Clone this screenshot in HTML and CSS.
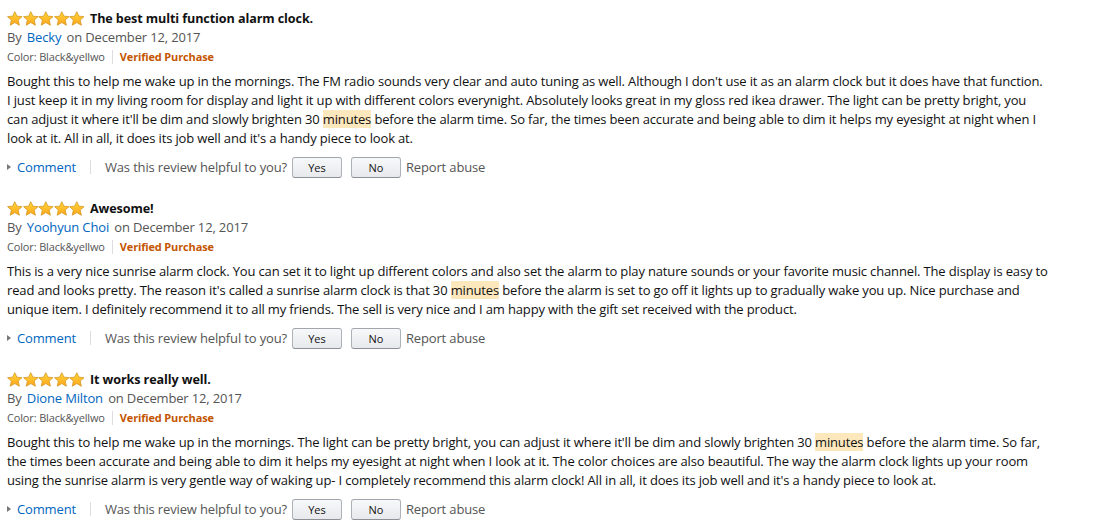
FILE: index.html
```html
<!DOCTYPE html>
<html lang="en">
<head>
  <meta charset="UTF-8">
  <title>Customer reviews</title>
  <link rel="stylesheet" href="styles.css">
</head>
<body>

  <svg width="0" height="0" class="defs">
    <defs>
      <linearGradient id="starFill" x1="0" y1="0" x2="0" y2="1">
        <stop offset="0" stop-color="#ffd83a"/>
        <stop offset="1" stop-color="#ffa41c"/>
      </linearGradient>
      <symbol id="star" viewBox="0 0 16 15">
        <path d="M8 0.5 L10.2 5.1 L15.4 5.6 L11.5 9.1 L12.7 14.4 L8 11.7 L3.3 14.4 L4.5 9.1 L0.6 5.6 L5.8 5.1 Z" fill="url(#starFill)" stroke="#d3961c" stroke-width="0.8" stroke-linejoin="round"/>
      </symbol>
    </defs>
  </svg>

  <div class="reviews">

    <div class="review">
      <div class="review-head">
        <span class="stars">
          <svg><use href="#star"/></svg><svg><use href="#star"/></svg><svg><use href="#star"/></svg><svg><use href="#star"/></svg><svg><use href="#star"/></svg>
        </span>
        <a class="review-title" href="#">The best multi function alarm clock.</a>
      </div>
      <div class="byline">By <a class="author" href="#">Becky</a> on December 12, 2017</div>
      <div class="meta">
        <span class="variant">Color: Black&amp;yellwo</span>
        <span class="verified">Verified Purchase</span>
      </div>
      <p class="review-text">Bought this to help me wake up in the mornings. The FM radio sounds very clear and auto tuning as well. Although I don't use it as an alarm clock but it does have that function. I just keep it in my living room for display and light it up with different colors everynight. Absolutely looks great in my gloss red ikea drawer. The light can be pretty bright, you can adjust it where it'll be dim and slowly brighten 30 <span class="hl">minutes</span> before the alarm time. So far, the times been accurate and being able to dim it helps my eyesight at night when I look at it. All in all, it does its job well and it's a handy piece to look at.</p>
      <div class="actions">
        <a class="comment" href="#">Comment</a>
        <span class="helpful">Was this review helpful to you?</span>
        <button class="vote">Yes</button>
        <button class="vote">No</button>
        <a class="report" href="#">Report abuse</a>
      </div>
    </div>

    <div class="review">
      <div class="review-head">
        <span class="stars">
          <svg><use href="#star"/></svg><svg><use href="#star"/></svg><svg><use href="#star"/></svg><svg><use href="#star"/></svg><svg><use href="#star"/></svg>
        </span>
        <a class="review-title" href="#">Awesome!</a>
      </div>
      <div class="byline">By <a class="author" href="#">Yoohyun Choi</a> on December 12, 2017</div>
      <div class="meta">
        <span class="variant">Color: Black&amp;yellwo</span>
        <span class="verified">Verified Purchase</span>
      </div>
      <p class="review-text">This is a very nice sunrise alarm clock. You can set it to light up different colors and also set the alarm to play nature sounds or your favorite music channel. The display is easy to read and looks pretty. The reason it's called a sunrise alarm clock is that 30 <span class="hl">minutes</span> before the alarm is set to go off it lights up to gradually wake you up. Nice purchase and unique item. I definitely recommend it to all my friends. The sell is very nice and I am happy with the gift set received with the product.</p>
      <div class="actions">
        <a class="comment" href="#">Comment</a>
        <span class="helpful">Was this review helpful to you?</span>
        <button class="vote">Yes</button>
        <button class="vote">No</button>
        <a class="report" href="#">Report abuse</a>
      </div>
    </div>

    <div class="review">
      <div class="review-head">
        <span class="stars">
          <svg><use href="#star"/></svg><svg><use href="#star"/></svg><svg><use href="#star"/></svg><svg><use href="#star"/></svg><svg><use href="#star"/></svg>
        </span>
        <a class="review-title" href="#">It works really well.</a>
      </div>
      <div class="byline">By <a class="author" href="#">Dione Milton</a> on December 12, 2017</div>
      <div class="meta">
        <span class="variant">Color: Black&amp;yellwo</span>
        <span class="verified">Verified Purchase</span>
      </div>
      <p class="review-text">Bought this to help me wake up in the mornings. The light can be pretty bright, you can adjust it where it'll be dim and slowly brighten 30 <span class="hl">minutes</span> before the alarm time. So far, the times been accurate and being able to dim it helps my eyesight at night when I look at it. The color choices are also beautiful. The way the alarm clock lights up your room using the sunrise alarm is very gentle way of waking up- I completely recommend this alarm clock! All in all, it does its job well and it's a handy piece to look at.</p>
      <div class="actions">
        <a class="comment" href="#">Comment</a>
        <span class="helpful">Was this review helpful to you?</span>
        <button class="vote">Yes</button>
        <button class="vote">No</button>
        <a class="report" href="#">Report abuse</a>
      </div>
    </div>

  </div>

</body>
</html>
```

FILE: styles.css
```css
body {
  margin: 0;
  padding: 8px 7px 0;
  background-color: #fff;
  color: #111;
  font-family: "Open Sans", "Noto Sans", Arial, sans-serif;
  font-size: 13px;
  letter-spacing: -0.15px;
}

a {
  text-decoration: none;
}

.defs {
  position: absolute;
  width: 0;
  height: 0;
}

.reviews {
  width: 1041px;
}

.review {
  margin-bottom: 20px;
}

.review-head {
  display: flex;
  align-items: center;
  height: 20px;
}

.stars {
  display: flex;
  margin-right: 5px;
}

.stars svg {
  width: 15.6px;
  height: 15px;
}

.review-title {
  color: #111;
  font-weight: bold;
  font-size: 12.6px;
  letter-spacing: -0.1px;
}

.byline {
  line-height: 19px;
  color: #555;
}

.author {
  color: #0066c0;
  margin: 0 2px;
}

.meta {
  display: flex;
  align-items: center;
  line-height: 19px;
  font-size: 11px;
  color: #555;
}

.variant {
  padding-right: 7px;
  border-right: 1px solid #ddd;
  line-height: 14px;
}

.verified {
  padding-left: 7px;
  color: #c45500;
  font-weight: bold;
}

.review-text {
  margin: 6px 0 0;
  line-height: 19px;
  color: #111;
}

.hl {
  background-color: #fde8bd;
}

.actions {
  display: flex;
  align-items: center;
  height: 22px;
  margin-top: 8px;
  color: #555;
}

.comment {
  color: #0066c0;
  padding-left: 10px;
  padding-right: 14px;
  border-right: 1px solid #ddd;
  line-height: 14px;
  position: relative;
}

.comment::before {
  content: "";
  position: absolute;
  left: 0;
  top: 4px;
  border-left: 4px solid #777;
  border-top: 3px solid transparent;
  border-bottom: 3px solid transparent;
}

.helpful {
  margin-left: 14px;
  margin-right: 5px;
}

.vote {
  width: 50px;
  height: 21px;
  margin-right: 9px;
  padding: 0;
  border: 1px solid #adb1b8;
  border-top-color: #a2a6ac;
  border-bottom-color: #8d9096;
  border-radius: 3px;
  background: linear-gradient(to bottom, #f7f8fa, #e7e9ec);
  color: #111;
  font-family: inherit;
  font-size: 11px;
}

.vote:last-of-type {
  margin-right: 5px;
}

.report {
  color: #555;
}
```
